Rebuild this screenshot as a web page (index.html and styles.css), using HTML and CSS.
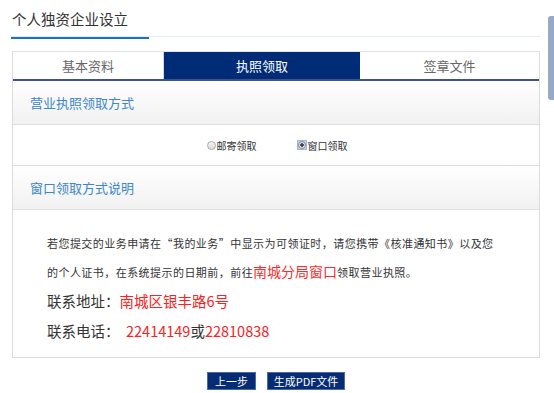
FILE: index.html
```html
<!DOCTYPE html>
<html lang="zh-CN">
<head>
    <meta charset="UTF-8">
    <title>个人独资企业设立</title>
    <link rel="stylesheet" href="styles.css">
</head>
<body>
    <div class="page">
        <div class="title-bar">
            <span class="title">个人独资企业设立</span>
        </div>

        <div class="panel">
            <div class="tabs">
                <div class="tab tab-first">基本资料</div>
                <div class="tab tab-active">执照领取</div>
                <div class="tab tab-last">签章文件</div>
            </div>

            <div class="section-head">营业执照领取方式</div>
            <div class="radio-row">
                <label class="radio-item">
                    <span class="radio"></span>邮寄领取
                </label>
                <label class="radio-item">
                    <span class="radio-box"><span class="radio checked"></span></span>窗口领取
                </label>
            </div>

            <div class="section-head">窗口领取方式说明</div>
            <div class="notice">
                <p class="line">若您提交的业务申请在“我的业务”中显示为可领证时，请您携带《核准通知书》以及您</p>
                <p class="line">的个人证书，在系统提示的日期前，前往<span class="hl">南城分局窗口</span>领取营业执照。</p>
                <p class="contact">联系地址：<span class="red">南城区银丰路6号</span></p>
                <p class="contact">联系电话：&nbsp;&nbsp;<span class="red">22414149</span>或<span class="red">22810838</span></p>
            </div>
        </div>

        <div class="actions">
            <button class="btn btn-prev">上一步</button>
            <button class="btn btn-pdf">生成PDF文件</button>
        </div>
    </div>

    <div class="side-tab"></div>
</body>
</html>
```

FILE: styles.css
```css
body {
    margin: 0;
    font-family: "Noto Sans CJK SC", "Noto Sans", sans-serif;
    color: #333;
    background: #fff;
}
.page {
    width: 528px;
    margin-left: 12px;
}
.title-bar {
    margin-left: -1px;
    padding-top: 6px;
    border-bottom: 1px solid #e2eef9;
    height: 30px;
}
.title {
    display: inline-block;
    width: 138px;
    height: 31px;
    padding-left: 1px;
    font-size: 14.5px;
    line-height: 22px;
    border-bottom: 2px solid #1b6fc8;
    box-sizing: border-box;
    color: #333;
}
.panel {
    margin-top: 14px;
    border: 1px solid #dcdcdc;
    border-top: 1px solid #e4e4e4;
}
.tabs {
    display: flex;
    height: 27px;
    border-bottom: 2px solid #3f5290;
}
.tab {
    font-size: 13px;
    line-height: 27px;
    text-align: center;
    color: #666;
    background: #fff;
}
.tab-first {
    width: 150px;
    border-right: 1px solid #d6d6d6;
}
.tab-active {
    width: 196px;
    background: #002c77;
    color: #fff;
}
.tab-last {
    flex: 1;
}
.section-head {
    height: 43px;
    line-height: 43px;
    padding-left: 17px;
    font-size: 13px;
    color: #3b86cc;
    background: linear-gradient(#ffffff, #f1f1f1);
    border-bottom: 1px solid #dedede;
}
.radio-row {
    display: flex;
    justify-content: center;
    gap: 40px;
    height: 40px;
    align-items: center;
    border-bottom: 1px solid #dedede;
    font-size: 10px;
    color: #333;
    padding-left: 2px;
}
.radio-item {
    display: flex;
    align-items: center;
}
.radio {
    display: inline-block;
    width: 7px;
    height: 7px;
    border-radius: 50%;
    border: 1px solid #aaa;
    background: linear-gradient(#f4f4f4, #dcdcdc);
    margin-right: 1px;
}
.radio-box {
    display: inline-flex;
    align-items: center;
    justify-content: center;
    width: 10px;
    height: 10px;
    background: #c5d8f2;
    border: 1px solid #9ab8e6;
    box-sizing: border-box;
    margin-right: 1px;
}
.radio.checked {
    width: 6px;
    height: 6px;
    margin: 0;
    border-color: #888;
    background: radial-gradient(circle, #444 0 1.5px, #e6e6e6 2px);
}
.notice {
    padding: 18px 20px 11px 34px;
}
.notice p {
    margin: 0;
}
.line {
    height: 28px;
    font-size: 11px;
    line-height: 28px;
    letter-spacing: 0.45px;
    white-space: nowrap;
}
.line:first-child {
    height: 30px;
    line-height: 30px;
}
.hl {
    font-size: 14px;
    line-height: 1;
    letter-spacing: 0;
    color: #ff2a2a;
}
.contact {
    font-size: 14.5px;
    line-height: 30px;
}
.red {
    color: #ff2020;
}
.actions {
    display: flex;
    justify-content: center;
    gap: 11px;
    margin-top: 14px;
}
.btn {
    height: 18px;
    padding: 0;
    font-family: inherit;
    font-size: 11px;
    color: #fff;
    background: #062d73;
    border: 1px solid #4d69a6;
    cursor: pointer;
}
.btn-prev {
    width: 49px;
}
.btn-pdf {
    width: 78px;
}
.side-tab {
    position: absolute;
    left: 548px;
    top: 16px;
    width: 10px;
    height: 84px;
    border-radius: 3px;
    background: #97a8c8;
}
```
